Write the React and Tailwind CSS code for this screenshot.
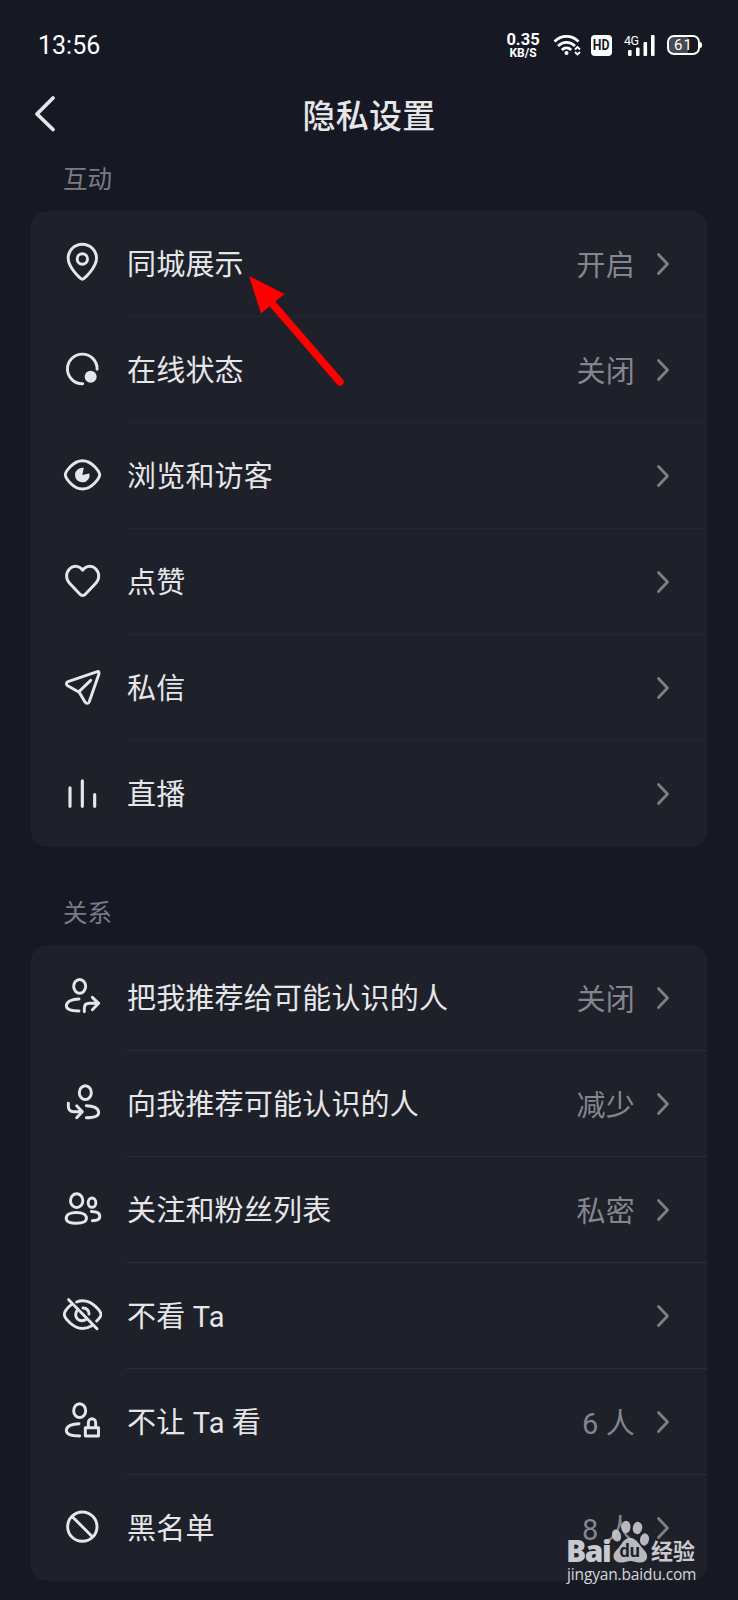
const LINE = {
  fill: "none",
  stroke: "currentColor",
  strokeWidth: 8.8,
  strokeLinecap: "round",
  strokeLinejoin: "round",
};

function Glyph({ children }) {
  return (
    <svg viewBox="0 0 120 120" className="size-10 shrink-0" {...LINE}>
      {children}
    </svg>
  );
}

const icons = {
  pin: (
    <>
      <path d="M61 112C57 112 18.500 77 18.500 48.500a42.500 42 0 0 1 85 0C103.500 77 65 112 61 112Z" />
      <circle cx="61" cy="51" r="15.500" />
    </>
  ),
  status: (
    <>
      <path d="M105.300 64A44.500 44.500 0 1 0 62 107.300" />
      <circle cx="86" cy="86" r="18" fill="currentColor" stroke="none" />
    </>
  ),
  eye: (
    <>
      <path d="M10 62.500C10 54 32 20 61.500 20S113 54 113 62.500 91 105 61.500 105 10 71 10 62.500Z" />
      <path
        d="M61 63 65.500 41.500A22 22 0 1 0 82.500 58.500Z"
        fill="currentColor"
        stroke="none"
      />
    </>
  ),
  heart: (
    <path d="M62 31C54 17 34 15 23 26.500 11 38 11 57 22 69L54 103C58 107.500 66 107.500 70 103L102 69C113 57 113 38 101 26.500 90 15 70 17 62 31Z" />
  ),
  plane: (
    <>
      <path d="M106 17 18 47C12 49 12 56 17 59L49 77C51 78 52 79 53 81L69 108C72 113.500 79 113.500 81.500 108L110.500 25C112 19 110.500 15.500 106 17Z" />
      <path d="M51 77 86 43" />
    </>
  ),
  bars: (
    <path strokeWidth="9.500" d="M24 47.500V103M61 26.500V103M98 68V103" />
  ),
  userOut: (
    <>
      <ellipse cx="53" cy="31" rx="18" ry="20.500" />
      <path d="M51 69C31 69 13 76 13 89.500 13 102 31 105 51 105" />
      <path d="M67 107V97C67 87 73 82 82 82H110M91 64 110 82 91 101" />
    </>
  ),
  userIn: (
    <>
      <ellipse cx="70" cy="32" rx="18" ry="20.500" />
      <path d="M73 71C93 71 110 78 110 91.500 110 104 93 107.500 73 107.500" />
      <path d="M19 64V73C19 83 25 89 35 89H61M44 71.500 61 89 44 107" />
    </>
  ),
  users: (
    <>
      <ellipse cx="44" cy="38" rx="18.500" ry="20.500" />
      <path d="M43 73.500C61 73.500 73.500 80 73.500 91S61 106 43 106 12.500 102 12.500 91 25 73.500 43 73.500Z" />
      <ellipse cx="90" cy="44" rx="11.500" ry="14" />
      <path d="M88 70.500C103 70.500 113.500 75 113.500 85 113.500 95 103 98.500 91 98.500" />
    </>
  ),
  eyeOff: (
    <>
      <path d="M29 31C16 41 7 54 7 61.500 7 70 31 103.500 61.500 103.500 72 103.500 81 100 89 95M44 24C50 21.500 56 20.500 61.500 20.500 93 20.500 117 53 117 61.500 117 66 111 74 104 81" />
      <path d="M44 51C36 68 47 80 60 80 66 80 71 78 74 74M63 42C74 42 82 51 81 60" />
      <path d="M20 17 105 104" />
    </>
  ),
  userLock: (
    <>
      <ellipse cx="53" cy="32" rx="18" ry="20.500" />
      <path d="M51 71C31 71 13 78 13 91.500 13 105 31 108 53 108" />
      <path d="M70 83.500H109.500V108H70ZM79 83V69C79 52 101 52 101 69V83" />
    </>
  ),
  ban: (
    <>
      <circle cx="61" cy="62" r="44" />
      <path d="M31 32 91 92" />
    </>
  ),
};

const interaction = [
  { icon: "pin", label: "同城展示", value: "开启" },
  { icon: "status", label: "在线状态", value: "关闭" },
  { icon: "eye", label: "浏览和访客" },
  { icon: "heart", label: "点赞" },
  { icon: "plane", label: "私信" },
  { icon: "bars", label: "直播" },
];

const relations = [
  { icon: "userOut", label: "把我推荐给可能认识的人", value: "关闭" },
  { icon: "userIn", label: "向我推荐可能认识的人", value: "减少" },
  { icon: "users", label: "关注和粉丝列表", value: "私密" },
  { icon: "eyeOff", label: "不看 Ta" },
  { icon: "userLock", label: "不让 Ta 看", value: "6 人" },
  { icon: "ban", label: "黑名单", value: "8 人" },
];

function StatusBar() {
  return (
    <div className="flex h-[90px] items-center justify-between pl-[38px] pr-[38px] text-white">
      <span className="text-[25px] leading-none">13:56</span>
      <div className="flex items-center">
        <div className="flex w-[34px] flex-col items-center font-bold">
          <span className="text-[16.500px] leading-[15px]">0.35</span>
          <span className="text-[12px] leading-[12px]">KB/S</span>
        </div>

        {/* Wifi */}
        <svg viewBox="0 0 28 22" className="ml-[13px] h-[22px] w-[28px]" fill="none" stroke="currentColor" strokeWidth="2.600">
          <path d="M1.500 7.500C8.500 0.700 18.500 0.700 25.500 7.500M5 12C10 7.200 17 7.200 22 12M8.800 16C11.500 13.200 15.500 13.200 18.200 16" />
          <circle cx="13.500" cy="19" r="2" fill="currentColor" stroke="none" />
          <path d="M22 15.500 24.500 13 27 15.500M22 18 24.500 20.500 27 18" strokeWidth="1.800" />
        </svg>

        <span className="ml-[10px] flex h-[21px] w-[21px] items-center justify-center rounded-[4px] bg-white text-[#161923]">
          <span className="scale-x-[0.820] text-[15px] font-bold leading-none">HD</span>
        </span>

        {/* Signal */}
        <div className="relative ml-3 h-[21px] w-[31px]">
          <span className="absolute left-0 top-0 text-[12.500px] leading-[11px] tracking-[-0.500px]">4G</span>
          <svg viewBox="0 0 31 21" className="size-full" fill="currentColor">
            <rect x="4" y="15" width="3.600" height="6" rx="1" />
            <rect x="12" y="12.500" width="3.600" height="8.500" rx="1" />
            <rect x="19.500" y="7" width="3.600" height="14" rx="1" />
            <rect x="27" y="0" width="3.600" height="21" rx="1" />
          </svg>
        </div>

        {/* Battery */}
        <div className="relative ml-3 flex h-5 w-[33px] items-center justify-center rounded-[7px] border-2 border-white bg-linear-to-r from-[#484a52] from-65% to-[#161923] to-65% text-[15px] leading-none tracking-[1px]">
          61
          <span className="absolute -right-[4px] top-[5px] h-[6px] w-[2px] rounded-r bg-white" />
        </div>
      </div>
    </div>
  );
}

function Header() {
  return (
    <header className="relative flex h-[52px] items-center justify-center">
      <svg viewBox="0 0 22 38" className="absolute left-[34px] top-[5px] h-[38px] w-[22px]" {...LINE} strokeWidth="3.800">
        <path d="M19 3 3 19 19 34.500" />
      </svg>
      <h1 className="text-[33px] font-medium leading-none tracking-[0.200px]">隐私设置</h1>
    </header>
  );
}

function Row({ icon, label, value, divider }) {
  return (
    <li className="relative flex h-[106px] items-center pl-[31px] pr-[37px]">
      <div className="-mt-1">
        <Glyph>{icons[icon]}</Glyph>
      </div>
      <span className="ml-[25px] mt-[3px] text-[29px] leading-none tracking-[0.200px]">{label}</span>
      <span className="ml-auto mt-[5px] text-[29px] leading-none tracking-[0.200px] text-[#85868d]">
        {value}
      </span>
      <svg viewBox="0 0 14 24" className="ml-[21px] h-6 w-[14px] text-[#7e7f87]" {...LINE} strokeWidth="2.800">
        <path d="M2.500 2.500 11.500 12 2.500 21.500" />
      </svg>
      {divider && <div className={`absolute bottom-0 left-[95px] right-0 h-px ${divider}`} />}
    </li>
  );
}

function Section({ title, rows, divider }) {
  return (
    <section>
      <h2 className="pl-[63px] text-[24.500px] leading-[24px]  text-[#7b7c83]">{title}</h2>
      <ul className="mx-[31px] mt-[19px] rounded-2xl bg-[#1e202a]">
        {rows.map((row, i) => (
          <Row key={row.label} {...row} divider={i < rows.length - 1 && divider} />
        ))}
      </ul>
    </section>
  );
}

function Watermark() {
  return (
    <div className="absolute left-[566px] top-[1519px] h-[66px] w-[134px] text-[#c9c9ce]">
      <svg viewBox="0 0 134 66" className="absolute inset-0 size-full opacity-90" fill="currentColor">
        <ellipse cx="50.500" cy="16.500" rx="4.500" ry="6.200" transform="rotate(-15 50.500 16.500)" />
        <ellipse cx="60" cy="8" rx="4.500" ry="6.200" />
        <ellipse cx="71.500" cy="9" rx="4.700" ry="6.200" transform="rotate(10 71.500 9)" />
        <ellipse cx="78.500" cy="20.500" rx="4.500" ry="6.200" transform="rotate(10 78.500 20.500)" />
        <path d="M64 19C71 19 73 26 78 31 84 37 81 43.500 74 43.500 69 43.500 68 42 64.500 42S60 43.500 55 43.500C47 43.500 45 36 51 30.500 56 26 57 19 64 19Z" />
      </svg>
      <span className="absolute left-0 top-[17px] font-['Open_Sans'] text-[30px] font-extrabold leading-[29px] tracking-[-1.500px]">
        Bai
      </span>
      <span className="absolute left-[53.500px] top-[22px] text-[18px] font-bold leading-[19px] text-[#1e202a]">
        du
      </span>
      <span className="absolute left-[85px] top-[22px] text-[22px] font-bold leading-[22px]">经验</span>
      <span className="absolute left-px top-[45px] font-['Open_Sans'] text-[15.500px] font-medium leading-[20px] tracking-[-0.150px] text-[#d6d6da]">
        jingyan.baidu.com
      </span>
    </div>
  );
}

export default function App() {
  return (
    <div className="relative h-[1600px] w-[738px] overflow-hidden bg-[#161923] font-[Roboto,'Noto_Sans_CJK_SC',sans-serif] text-[#e6e6e8]">
      <StatusBar />
      <Header />
      <div className="mt-[26px] flex flex-col gap-[55px]">
        <Section title="互动" rows={interaction} divider="bg-[#252731]" />
        <Section title="关系" rows={relations} divider="bg-[#2d2f38]" />
      </div>

      {/* Pointer */}
      <svg viewBox="0 0 100 112" className="absolute left-[248px] top-[275px] h-[112px] w-[100px]">
        <path d="M22 26 92 107" stroke="#fe0000" strokeWidth="7.500" strokeLinecap="round" />
        <path d="M1 1 36.500 19 13 38.500Z" fill="#fe0000" />
      </svg>

      <Watermark />
    </div>
  );
}
